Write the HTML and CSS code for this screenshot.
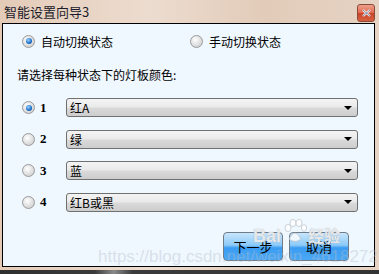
FILE: index.html
```html
<!DOCTYPE html>
<html lang="zh-CN">

<head>
    <meta charset="UTF-8">
    <meta name="viewport" content="width=device-width, initial-scale=1.0">
    <title>智能设置向导3</title>
    <link rel="stylesheet" href="styles.css">
</head>

<body>
    <section class="janela">
        <div class="titulo">
            <span class="titulo-texto">智能设置向导3</span>
            <button class="fechar">
                <svg width="9" height="8" viewBox="0 0 9 8">
                    <path d="M1 1 L8 7 M8 1 L1 7" stroke="#fff" stroke-width="2.2" />
                    <path d="M1 1 L8 7 M8 1 L1 7" stroke="#5a6a8a" stroke-width="0.8" />
                </svg>
            </button>
        </div>

        <div class="cliente">
            <div class="modo">
                <label class="opcao"><span class="radio marcado"></span>自动切换状态</label>
                <label class="opcao opcao-dir"><span class="radio"></span>手动切换状态</label>
            </div>

            <p class="pergunta">请选择每种状态下的灯板颜色:</p>

            <div class="linhas">
                <div class="linha">
                    <span class="radio marcado"></span>
                    <span class="num">1</span>
                    <div class="combo"><span>红A</span><i class="seta"></i></div>
                </div>
                <div class="linha">
                    <span class="radio"></span>
                    <span class="num">2</span>
                    <div class="combo"><span>绿</span><i class="seta"></i></div>
                </div>
                <div class="linha">
                    <span class="radio"></span>
                    <span class="num">3</span>
                    <div class="combo"><span>蓝</span><i class="seta"></i></div>
                </div>
                <div class="linha">
                    <span class="radio"></span>
                    <span class="num">4</span>
                    <div class="combo"><span>红B或黑</span><i class="seta"></i></div>
                </div>
            </div>

            <div class="botoes">
                <button class="btn">下一步</button>
                <button class="btn">取消</button>
            </div>

            <!-- marcas d'agua por cima -->
            <span class="marca">https://blog.csdn.net/weixin_46182727</span>
            <span class="baidu">Bai<svg class="pata" width="24" height="26" viewBox="0 0 24 26">
                    <g fill="#fff" stroke="#b8bcc4" stroke-width="0.8">
                        <ellipse cx="5" cy="9" rx="3" ry="3.6" />
                        <ellipse cx="10" cy="4" rx="3" ry="3.6" />
                        <ellipse cx="16" cy="4" rx="3" ry="3.6" />
                        <ellipse cx="21" cy="9" rx="2.6" ry="3.4" />
                        <path d="M6 20 Q12 8 18 20 Q12 25 6 20 Z" />
                    </g>
                </svg><span class="jingyan">经验</span></span>
        </div>
        <div class="rodape"></div>
    </section>
</body>

</html>
```

FILE: styles.css
```css
body {
    margin: 0;
    width: 379px;
    height: 274px;
    overflow: hidden;
    font-family: "Noto Sans CJK SC", "Noto Sans", sans-serif;
}

.janela {
    width: 379px;
    height: 274px;
    display: flex;
    flex-direction: column;
    background: linear-gradient(90deg, #e4cbb8, #ecdccf 40%, #e2cbb9 70%, #e6d3c4);
}

.titulo {
    height: 23px;
    display: flex;
    align-items: center;
    justify-content: space-between;
    padding: 0 4px 0 4px;
}

.titulo-texto {
    font-size: 13px;
    color: #1b1b2a;
    margin-top: -1px;
}

.fechar {
    width: 18px;
    height: 18px;
    margin-top: 2px;
    padding: 0;
    border: 1px solid #8a4a3a;
    border-radius: 3px;
    background: linear-gradient(#eea08c, #e0684e 50%, #c8442c 51%, #d8603e);
    display: flex;
    align-items: center;
    justify-content: center;
}

.cliente {
    position: relative;
    height: 242px;
    margin: 0 4px 0 2px;
    border: 1px solid #000;
    background-color: #eff7ff;
    font-size: 12px;
    color: #000;
}

.modo {
    display: flex;
    margin-top: 9px;
    height: 16px;
    align-items: center;
}

.opcao {
    display: flex;
    align-items: center;
    margin-left: 19px;
}

.opcao .radio {
    margin-right: 6px;
}

.opcao-dir {
    margin-left: 77px;
}

.radio {
    width: 11px;
    height: 11px;
    border-radius: 50%;
    border: 1px solid #9a9a9a;
    background: radial-gradient(circle at 40% 35%, #ffffff, #d6d6d6 70%, #c4c4c4);
    display: inline-block;
    position: relative;
    flex: none;
}

.marcado::after {
    content: "";
    position: absolute;
    left: 2.5px;
    top: 2.5px;
    width: 6px;
    height: 6px;
    border-radius: 50%;
    background: radial-gradient(circle at 40% 35%, #9ad4ff, #1a6cc8 60%, #0a3c80);
}

.pergunta {
    margin: 18px 0 0 14px;
    line-height: 16px;
}

.linhas {
    display: flex;
    flex-direction: column;
    gap: 12.5px;
    margin-top: 15px;
}

.linha {
    height: 19px;
    display: flex;
    align-items: center;
    padding-left: 19px;
}

.num {
    font-family: "Liberation Serif", serif;
    font-weight: bold;
    font-size: 13px;
    margin-left: 5px;
    width: 26px;
}

.combo {
    width: 283px;
    height: 17px;
    border: 1px solid #707070;
    border-radius: 3px;
    background: linear-gradient(#f4f4f4, #eaeaea 45%, #d9d9d9 55%, #cdcdcd);
    display: flex;
    align-items: center;
    justify-content: space-between;
    padding: 0 4px 0 3px;
}

.combo span {
    line-height: 17px;
}

.seta {
    width: 0;
    height: 0;
    border-left: 4px solid transparent;
    border-right: 4px solid transparent;
    border-top: 4px solid #000;
    margin-right: 1px;
}

.botoes {
    display: flex;
    justify-content: flex-end;
    gap: 6px;
    margin: 20px 25px 0 0;
}

.btn {
    width: 60px;
    height: 29px;
    border: 1px solid #6e7c8a;
    border-radius: 4px;
    background: linear-gradient(#c8e6fc, #8ccaf8 45%, #3a9cf2 55%, #4aa8f6);
    font-family: "Noto Sans CJK SC", sans-serif;
    font-size: 13px;
    color: #000;
    padding: 0;
}

.marca {
    position: absolute;
    left: 95px;
    top: 223px;
    font-family: "Liberation Sans", sans-serif;
    font-size: 17px;
    color: rgba(180, 188, 198, 0.4);
    white-space: nowrap;
}

.baidu {
    position: absolute;
    left: 250px;
    top: 195px;
    display: flex;
    align-items: flex-end;
    font-family: "Liberation Sans", sans-serif;
    font-weight: bold;
    font-size: 18px;
    color: rgba(255, 255, 255, 0.75);
    text-shadow: 0 0 1px #9aa0a8;
}

.pata {
    margin: 0 0 2px 2px;
    opacity: 0.8;
}

.jingyan {
    font-family: "Noto Sans CJK SC", sans-serif;
    font-size: 16px;
    margin-left: 1px;
}

.rodape {
    margin-top: auto;
    height: 4px;
    background: linear-gradient(90deg, #2e2e2e, #3a3a3a 25%, #8a8a8a 30%, #3a3a3a 35%, #333);
}
```
